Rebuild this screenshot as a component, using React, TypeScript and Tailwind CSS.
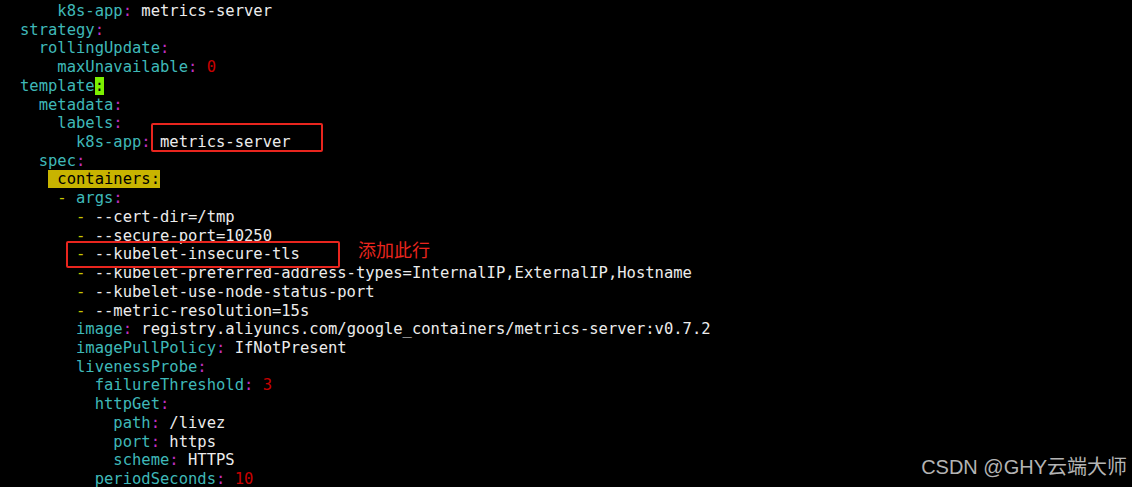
import type { ReactNode } from "react";

type Seg = [string, string];

const K = "text-[#3fb8b8]";
const C = "text-[#c030c0]";
const V = "text-[#ececec]";
const N = "text-[#c80000]";
const D = "text-[#c8c800]";

const key = (indent: number, name: string): Seg[] => [
  [" ".repeat(indent) + name, K],
  [":", C],
];

const LINES: Seg[][] = [
  [...key(4, "k8s-app"), [" metrics-server", V]],
  key(0, "strategy"),
  key(2, "rollingUpdate"),
  [...key(4, "maxUnavailable"), [" 0", N]],
  [["template", K], [":", "bg-[#7cf000] text-black"]],
  key(2, "metadata"),
  key(4, "labels"),
  [...key(6, "k8s-app"), [" metrics-server", V]],
  key(2, "spec"),
  [["   ", ""], [" containers:", "bg-[#c8b400] text-black"]],
  [["    - ", D], ...key(0, "args")],
  [["      - ", D], ["--cert-dir=/tmp", V]],
  [["      - ", D], ["--secure-port=10250", V]],
  [["      - ", D], ["--kubelet-insecure-tls", V]],
  [["      - ", D], ["--kubelet-preferred-address-types=InternalIP,ExternalIP,Hostname", V]],
  [["      - ", D], ["--kubelet-use-node-status-port", V]],
  [["      - ", D], ["--metric-resolution=15s", V]],
  [...key(6, "image"), [" registry.aliyuncs.com/google_containers/metrics-server:v0.7.2", V]],
  [...key(6, "imagePullPolicy"), [" IfNotPresent", V]],
  key(6, "livenessProbe"),
  [...key(8, "failureThreshold"), [" 3", N]],
  key(8, "httpGet"),
  [...key(10, "path"), [" /livez", V]],
  [...key(10, "port"), [" https", V]],
  [...key(10, "scheme"), [" HTTPS", V]],
  [...key(8, "periodSeconds"), [" 10", N]],
];

function Line({ segs }: { segs: Seg[] }) {
  return (
    <div className="h-[18.72px] whitespace-pre">
      {segs.map(([text, cls], i) => (
        <span key={i} className={cls}>
          {text}
        </span>
      ))}
    </div>
  );
}

function Mark({ className, children }: { className: string; children?: ReactNode }) {
  return <div className={`absolute ${className}`}>{children}</div>;
}

export default function App() {
  return (
    <div className="relative w-[1132px] h-[487px] overflow-hidden bg-black">
      <div className="pl-[20px] pt-[2px] font-['DejaVu_Sans_Mono',monospace] text-[15.5px] leading-[18.72px]">
        {LINES.map((segs, i) => (
          <Line key={i} segs={segs} />
        ))}
      </div>

      <Mark className="left-[151px] top-[123px] w-[172px] h-[29px] rounded-[2px] border-2 border-[#e8251e]" />
      <Mark className="left-[66px] top-[241px] w-[274px] h-[27px] rounded-[2px] border-2 border-[#e8251e]" />
      <Mark className="left-[358px] top-[237px] text-[18px] leading-[24px] text-[#e8251e] font-['Noto_Sans_CJK_SC',sans-serif]">
        添加此行
      </Mark>
      <Mark className="right-[5px] bottom-[8px] text-[20px] leading-[24px] text-[#b4b4b4] font-['Liberation_Sans','Noto_Sans_CJK_SC',sans-serif]">
        CSDN @GHY云端大师
      </Mark>
    </div>
  );
}
